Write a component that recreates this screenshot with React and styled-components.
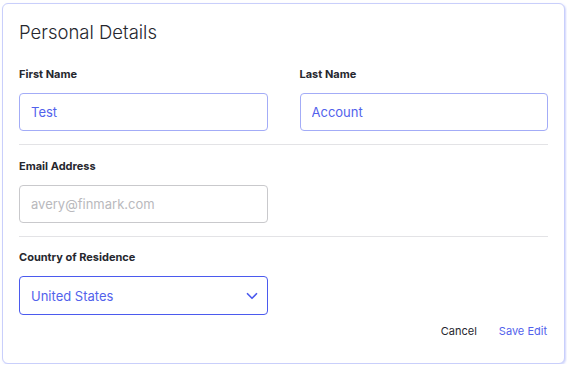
import React from 'react'
import styled, { createGlobalStyle } from 'styled-components';
import { ChevronDown } from 'lucide-react';

const GlobalStyle = createGlobalStyle`
    body {
        margin: 0;
        background: #ffffff;
        font-family: Inter, "Noto Sans", sans-serif;
    }
`;

const Card = styled.div`
    margin: 3px 2px 0 2px;
    height: 361px;
    box-sizing: border-box;
    padding: 16px 16px 0 16px;
    border: 1px solid #c9cffb;
    border-radius: 6px;
    box-shadow: 1px 1px 2px rgba(120, 135, 245, 0.35);
    background: #fff;
`;

const Title = styled.h2`
    margin: 0 0 22px;
    font-size: 18.5px;
    line-height: 24px;
    font-weight: 300;
    color: #26272e;
`;

const Section = styled.div`
    display: grid;
    grid-template-columns: ${p => p.cols === 2 ? '1fr 1fr' : '249px'};
    column-gap: 32px;
    padding: ${p => p.top}px 0 13px;
    border-bottom: ${p => p.last ? 'none' : '1px solid #e3e3e6'};
`;

const Field = styled.label`
    display: flex;
    flex-direction: column;
    gap: 11px;
`;

const Label = styled.span`
    font-size: 11px;
    line-height: 16px;
    font-weight: 700;
    color: #26272e;
`;

const Input = styled.input`
    box-sizing: border-box;
    width: 100%;
    height: 38px;
    padding: 0 11px;
    border: 1px solid ${p => p.filled ? '#a3acf7' : '#c9c9cc'};
    border-radius: 4px;
    font-family: inherit;
    font-size: 13px;
    color: #5262ec;
    outline: none;
    background: #fff;

    &::placeholder {
        color: #b9b9bd;
    }
`;

const Select = styled.div`
    box-sizing: border-box;
    height: 39px;
    padding: 0 6px 0 11px;
    display: flex;
    align-items: center;
    justify-content: space-between;
    border: 1px solid #4b5aee;
    border-radius: 4px;
    font-size: 13px;
    color: #5262ec;
`;

const Actions = styled.div`
    display: flex;
    justify-content: flex-end;
    gap: 22px;
    margin-top: -5px;
    padding-right: 1px;
`;

const TextButton = styled.button`
    border: none;
    background: none;
    padding: 0;
    font-family: inherit;
    font-size: 11px;
    line-height: 16px;
    cursor: pointer;
    color: ${p => p.primary ? '#5262ec' : '#26272e'};
`;

export default function App() {
    return (
        <>
            <GlobalStyle />
            <Card>
                <Title>Personal Details</Title>
                <Section cols={2} top={0}>
                    <Field>
                        <Label>First Name</Label>
                        <Input filled defaultValue="Test" />
                    </Field>
                    <Field>
                        <Label>Last Name</Label>
                        <Input filled defaultValue="Account" />
                    </Field>
                </Section>
                <Section top={13}>
                    <Field>
                        <Label>Email Address</Label>
                        <Input placeholder="avery@finmark.com" />
                    </Field>
                </Section>
                <Section top={12} last>
                    <Field as="div">
                        <Label>Country of Residence</Label>
                        <Select>
                            <span>United States</span>
                            <ChevronDown size={18} strokeWidth={2.2} color="#4b5aee" />
                        </Select>
                    </Field>
                </Section>
                <Actions>
                    <TextButton>Cancel</TextButton>
                    <TextButton primary>Save Edit</TextButton>
                </Actions>
            </Card>
        </>
    )
}
